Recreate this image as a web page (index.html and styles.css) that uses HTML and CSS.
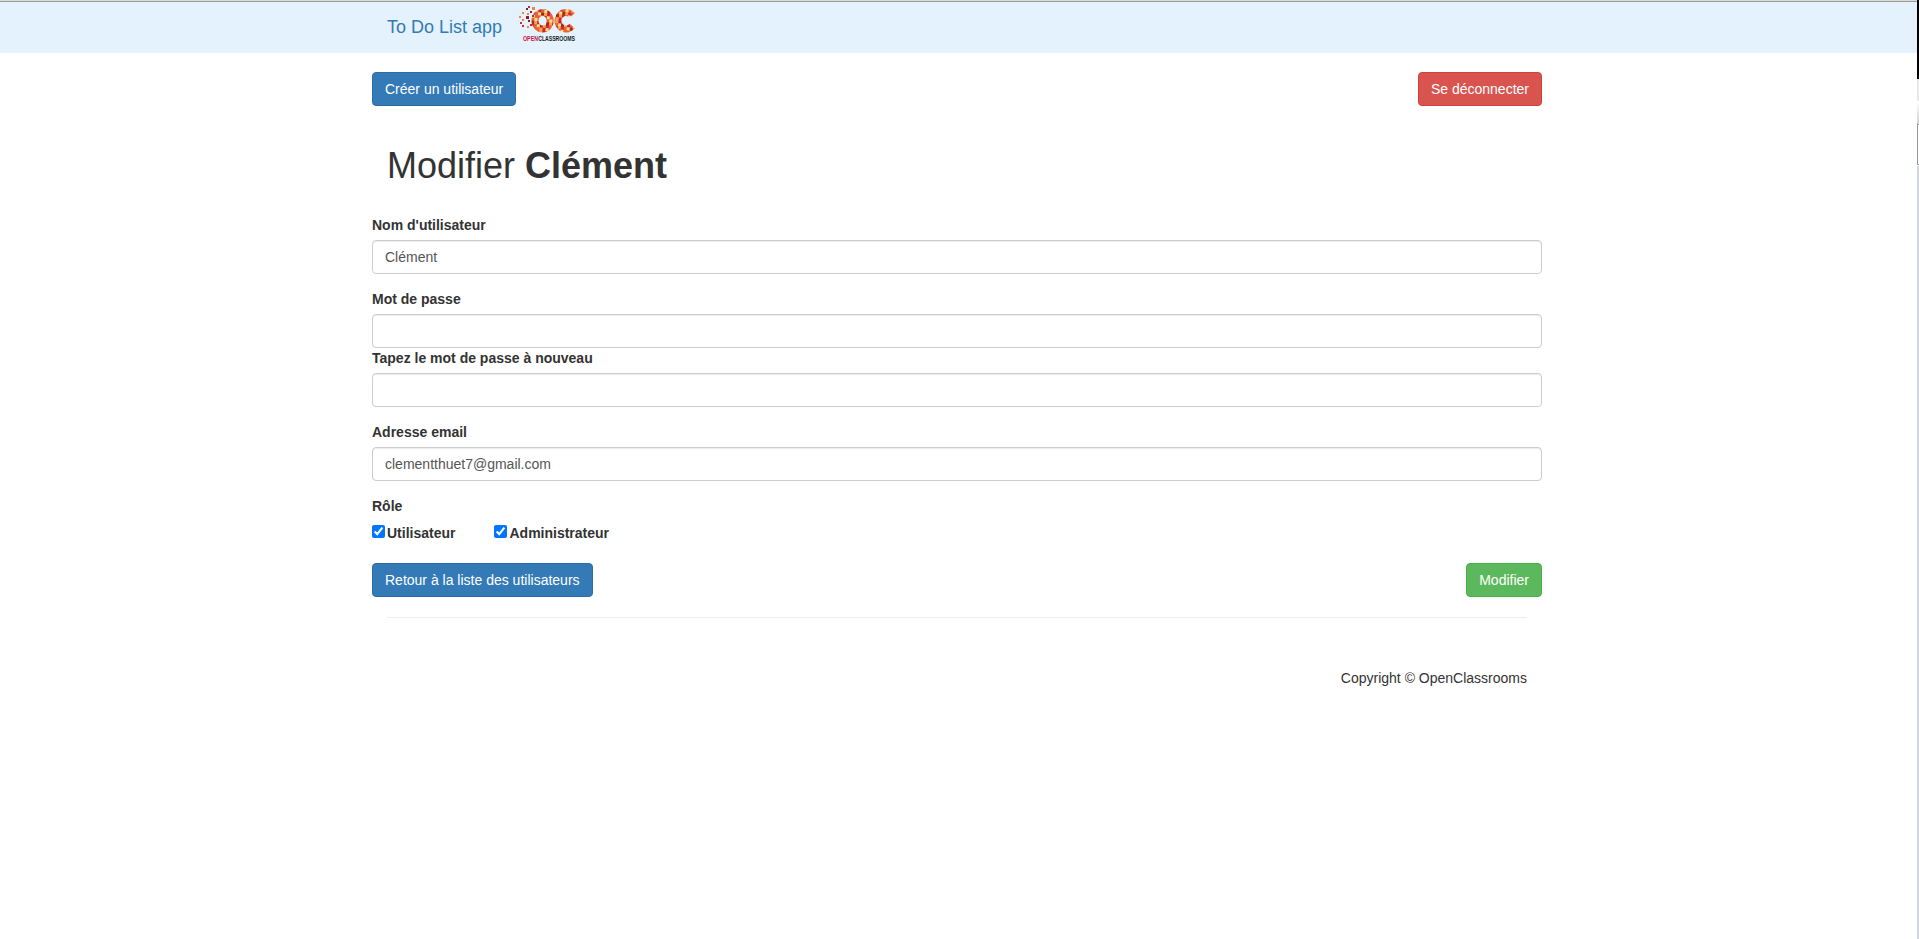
FILE: index.html
```html
<!DOCTYPE html>
<html lang="fr">
<head>
<meta charset="utf-8">
<title>To Do List app</title>
<link rel="stylesheet" href="styles.css">
</head>
<body>
<nav class="navbar">
  <div class="container nav-inner">
    <a class="brand">To Do List app</a>
    <svg class="logo" width="60" height="40" viewBox="0 0 60 40" role="img">
      <defs>
        <pattern id="mosaic" width="15" height="12" patternUnits="userSpaceOnUse" patternTransform="rotate(6)">
          <path fill="#e8603c" d="M0 0h15v12H0z"/>
          <path fill="#ffe27a" d="M3 0h3v3H3zM12 3h3v3h-3zM6 6h3v3H6zM0 9h3v3H0z"/>
          <path fill="#ffa04c" d="M9 0h3v3H9zM3 3h3v3H3zM12 6h3v3h-3zM9 9h3v3H9z"/>
          <path fill="#9c2a2a" d="M0 3h3v3H0zM9 6h3v3H9z"/>
          <path fill="#cf2438" d="M12 0h3v3h-3zM6 3h3v3H6zM0 6h3v3H0zM12 9h3v3h-3z"/>
        </pattern>
      </defs>
      <g fill="none" stroke="url(#mosaic)" stroke-width="7">
        <ellipse cx="24.6" cy="16.7" rx="7.6" ry="8.3"/>
        <path d="M54.2 11.4A8 8.3 0 1 0 54.2 22"/>
      </g>
      <path fill="#8e1c22" d="M8 4h2v2H8zM8 12h3v3H8zM12 7h2v2h-2zM10 16h2v2h-2z"/>
      <path fill="#cf2438" d="M10 2h2v2h-2zM2 18h2v2H2zM14 11h2v2h-2zM4 21h2v2H4zM12 20h2v2h-2z"/>
      <path fill="#f58246" d="M4 8h2v2H4zM14 3h3v3h-3zM1 12h2v2H1zM4 15h2v2H4zM9 22h2v2H9zM9 9h2v2H9z"/>
      <text class="logo-open" x="5" y="37.3" textLength="15" lengthAdjust="spacingAndGlyphs">OPEN</text>
      <text class="logo-class" x="20.2" y="37.3" textLength="36.8" lengthAdjust="spacingAndGlyphs">CLASSROOMS</text>
    </svg>
  </div>
</nav>
<main class="container">
  <div class="row actions">
    <a class="btn primary">Créer un utilisateur</a>
    <a class="btn danger">Se déconnecter</a>
  </div>
  <h1>Modifier <strong>Clément</strong></h1>
  <form class="row">
    <div class="group"><label for="name">Nom d'utilisateur</label><input id="name" class="control" type="text" value="Clément"></div>
    <div class="group">
      <label for="pw1">Mot de passe</label><input id="pw1" class="control" type="password">
      <label for="pw2">Tapez le mot de passe à nouveau</label><input id="pw2" class="control" type="password">
    </div>
    <div class="group"><label for="mail">Adresse email</label><input id="mail" class="control" type="text" value="clementthuet7@gmail.com"></div>
    <div class="group">
      <span class="label">Rôle</span>
      <div class="checks">
        <label class="check"><input type="checkbox" checked>Utilisateur</label>
        <label class="check"><input type="checkbox" checked>Administrateur</label>
      </div>
    </div>
    <div class="actions">
      <a class="btn primary">Retour à la liste des utilisateurs</a>
      <button class="btn success" type="button">Modifier</button>
    </div>
  </form>
  <hr>
  <footer>Copyright © OpenClassrooms</footer>
</main>
<div class="scroll-edge"><i class="edge-dark"></i><i class="edge-light"></i><i class="edge-button"></i><i class="edge-thumb"></i><i class="edge-track"></i></div>
</body>
</html>
```

FILE: styles.css
```css
* { box-sizing: border-box; }
body {
  margin: 0;
  height: 939px;
  overflow: hidden;
  background: #fff;
  color: #333;
  font: 14px/20px "Liberation Sans", Arial, sans-serif;
}
.container { width: 1170px; margin-left: 372px; padding: 0 15px; }
.navbar {
  height: 53px;
  background: #e3f2fd;
  border-top: 1px solid #dcdad5;
  box-shadow: inset 0 1px #999;
}
.nav-inner { display: flex; align-items: flex-start; }
.brand { color: #337ab7; font-size: 18px; padding-top: 16px; width: 131px; white-space: nowrap; }
.logo { display: block; margin-top: 3px; }
.logo-open, .logo-class { font: bold 6.5px "Liberation Sans", Arial, sans-serif; }
.logo-open { fill: #d01040; }
.logo-class { fill: #222; }
.row { margin: 0 -15px; }
.actions { display: flex; justify-content: space-between; }
.row.actions { margin-top: 19px; }
.btn {
  height: 34px;
  padding: 6px 12px;
  border: 1px solid;
  border-radius: 4px;
  color: #fff;
  font: inherit;
  white-space: nowrap;
}
.primary { background: #337ab7; border-color: #2e6da4; }
.danger { background: #d9534f; border-color: #d43f3a; }
.success { background: #5cb85c; border-color: #4cae4c; }
h1 { margin: 40px 0 29px; font-size: 36px; line-height: 40px; font-weight: 400; }
.group { margin-bottom: 15px; }
label, .label { display: block; margin-bottom: 5px; font-weight: 700; }
.control {
  display: block;
  width: 100%;
  height: 34px;
  padding: 6px 12px;
  border: 1px solid #ccc;
  border-radius: 4px;
  box-shadow: inset 0 1px 1px rgba(0, 0, 0, .075);
  color: #555;
  font: inherit;
}
.checks { display: flex; gap: 39px; padding-top: 2px; }
.check { display: flex; margin-bottom: 5px; }
.check input { width: 13px; height: 13px; margin: 2px 2px 0 0; }
hr { margin: 20px 0 0; border: 0; border-top: 1px solid #eee; }
footer { margin-top: 50px; text-align: right; }
.scroll-edge { position: absolute; top: 0; right: 0; width: 2px; height: 939px; display: flex; flex-direction: column; }
.edge-dark { height: 79px; background: #000; }
.edge-light { height: 22px; background: #e8e8e8; }
.edge-button { height: 23px; background: linear-gradient(#fff, #d0d0d5); }
.edge-thumb { height: 41px; border: 1px solid #96969e; border-right: 0; background: #fff; }
.edge-track { flex: 1; border-top: 1px solid #fff; background: #d4d9df; }
```
